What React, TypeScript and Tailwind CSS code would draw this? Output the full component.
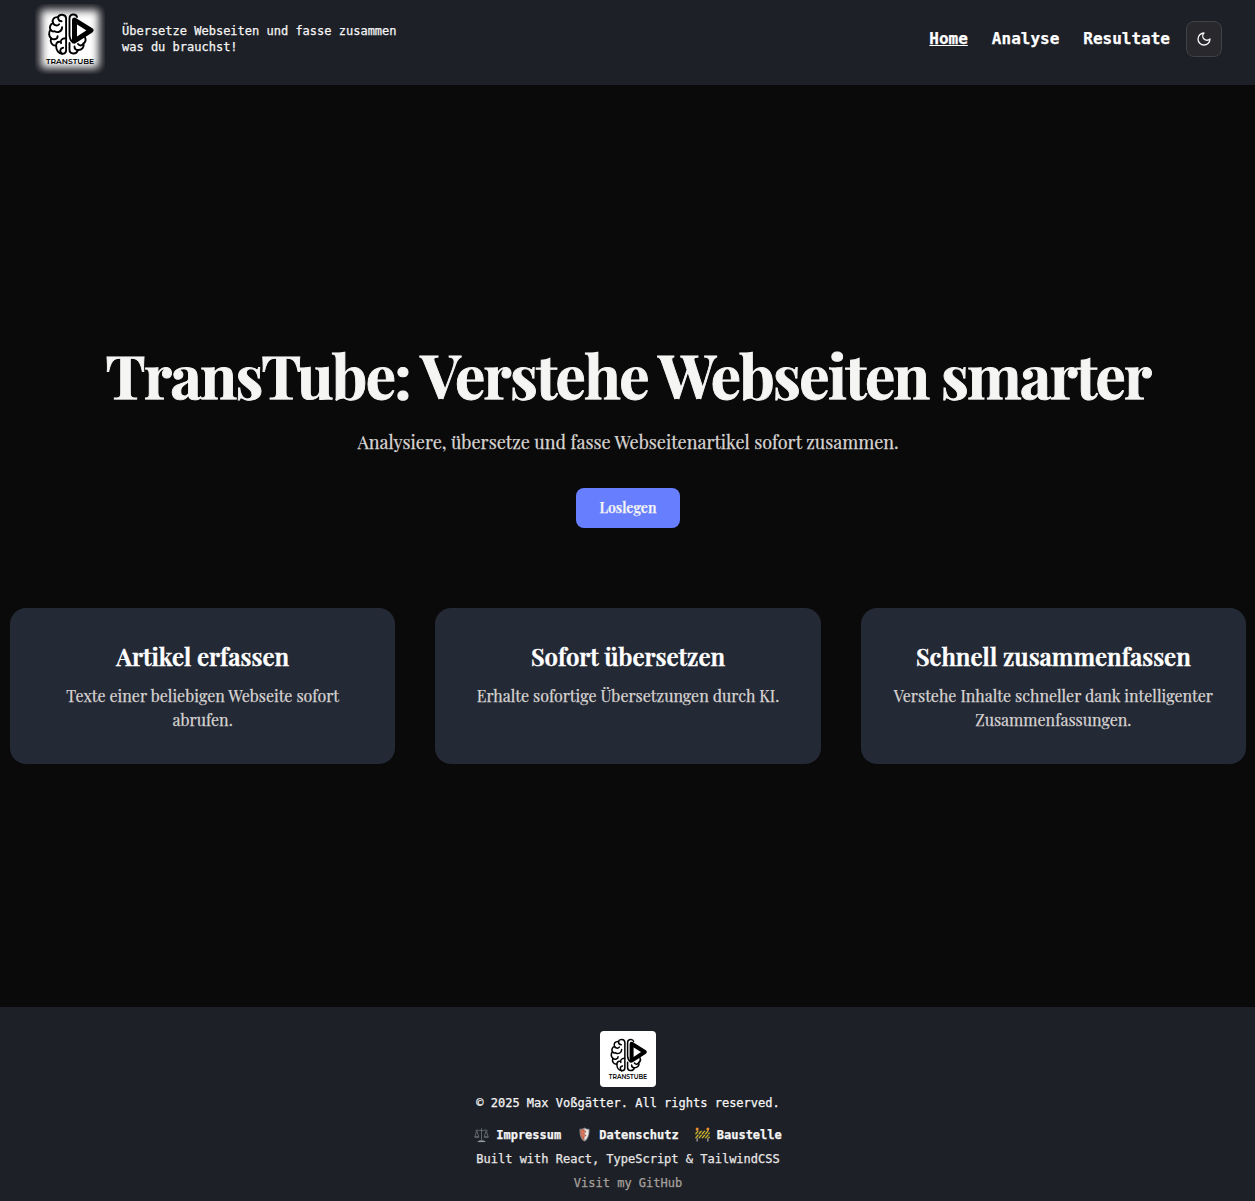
import React from "react";

const serif = "font-['Playfair_Display','Liberation_Serif',serif]";

function LogoMark({ className }: { className: string }) {
  return (
    <svg viewBox="0 0 70 70" className={className} role="img" aria-label="TransTube">
      <g fill="none" stroke="#000" strokeWidth="1.9" strokeLinecap="round" strokeLinejoin="round">
        <g transform="translate(0.6 0.7)">
          <path d="M30.5 13.5C30 9 23.500 9 22.500 12.500C18.500 12 16 15 17.500 18.500C14.500 19.500 13.500 23 15 25C12.800 27.500 13 31.500 15.500 33.500C14 37.500 16.500 41 20.500 41C20.500 45.500 23 49 26.500 49C29 49 30.500 47.500 30.500 45.500Z" />
          <path d="M22.500 12.500C22.500 15 24 16.500 26 16.500M17.500 18.500C18.500 21 22 21.500 23.500 19.500M26.500 22.500C26.500 27 22 28.500 19 26.500M15 25C16 27 17.500 27 19 26.500M15.500 33.500C18 35.500 22 34.500 22 31.500M30 33.500C26 33.500 24.500 36 25.500 38.500M20.500 41C20.500 38.500 22 37 24 37M26.500 49C23.500 47 24.500 43.500 27.500 43" />
        </g>
        <path d="M34.500 31V14.500C34.500 9.500 41 9.500 42 13M34.500 31C34.500 34 35.500 36.500 38 38.500M34.500 39V45.500C34.500 50.500 41.500 51 43 46C47 46 49.500 43 48.500 39.500C50.500 38 51 35.500 50 33.500" />
        <path d="M43 46C40.500 46 39.500 44.500 39.500 42.500M48.500 39.500C47 42 44.500 42 43 40" />
      </g>
      <path d="M39.500 16L56 26.300L39.500 37Z" fill="#fff" stroke="#000" strokeWidth="5" strokeLinejoin="round" />
      <text x="11" y="60.300" fontFamily="Montserrat, Inter, sans-serif" fontSize="7.900" fontWeight="600" textLength="48" lengthAdjust="spacingAndGlyphs">
        TRANSTUBE
      </text>
    </svg>
  );
}

function ScalesIcon() {
  return (
    <svg viewBox="0 0 16 16" className="-mt-px h-4 w-[15px]" fill="none" stroke="#656a70" strokeWidth="1">
      <path d="M8 .8V14M1.500 3.500C4 1.500 5.500 4 8 3C10.500 4 12 1.500 14.500 3.500M3 3.500L.8 10H5.200ZM13 3.500L10.800 10H15.200Z" />
      <path d="M.7 10.300H5.300M10.700 10.300H15.300M5.500 14H10.500" strokeWidth="1.500" />
      <path d="M4 15H12" stroke="#a8abad" />
    </svg>
  );
}

function ShieldIcon() {
  return (
    <svg viewBox="0 0 16 16" className="-mt-px h-[15px] w-[15px]">
      <path d="M8 .5C6 1.800 4.500 2 2.700 2C2.500 8 3.500 13 8 15.500C12.500 13 13.500 8 13.300 2C11.500 2 10 1.800 8 .5Z" fill="#85898c" />
      <path d="M8 1.500C6.500 2.500 5 2.800 3.600 2.900C3.600 8 4.500 12 8 14.300Z" fill="#cf694d" />
      <path d="M8 1.500C9.500 2.500 11 2.800 12.400 2.900C12.400 8 11.500 12 8 14.300Z" fill="#e7e7e5" />
      <path d="M8 3L10 5L8 7L10 9L8 11Z" fill="#b85540" />
      <path d="M5 5L7 6M5 8L7 9" stroke="#e6a28d" strokeWidth=".8" />
    </svg>
  );
}

function BarrierIcon() {
  return (
    <svg viewBox="0 0 16 16" className="-mt-px h-[15px] w-[15px]">
      <path d="M2.300 2V15.500M13.700 2V15.500" stroke="#a9a9a5" strokeWidth="1.300" />
      <path d="M.5 4H15.500V12H.5Z" fill="#30332e" />
      <path d="M.5 7.500L3.500 4M4 7.500L7 4M7.500 7.500L10.500 4M11 7.500L14 4M.5 12L3.500 8.500M4 12L7 8.500M7.500 12L10.500 8.500M11 12L14 8.500M14.300 7.500L15.500 6M14.300 12L15.500 10.500" stroke="#e3c32a" strokeWidth="1.200" />
      <circle cx="2.300" cy="2" r="1.600" fill="#ee8d2d" />
      <circle cx="13.700" cy="2" r="1.600" fill="#ee8d2d" />
    </svg>
  );
}

const features = [
  { title: "Artikel erfassen", text: "Texte einer beliebigen Webseite sofort abrufen." },
  { title: "Sofort übersetzen", text: "Erhalte sofortige Übersetzungen durch KI." },
  { title: "Schnell zusammenfassen", text: "Verstehe Inhalte schneller dank intelligenter Zusammenfassungen." },
];

export default function App() {
  return (
    <div className="flex min-h-[1201px] flex-col bg-[#0a0a0a] font-['DejaVu_Sans_Mono',monospace] text-[#f5f5f4] [-webkit-text-stroke:0.25px]">
      <header className="flex h-[85px] items-start justify-between bg-[#1e2028] pl-[35px] pr-[33px]">
        <div className="flex items-start gap-[17px] pt-1">
          <div className="relative h-[70px] w-[70px] overflow-hidden rounded-lg bg-[#1b1c23]">
            <div className="absolute inset-[6px] bg-white blur-[4px]" />
            <LogoMark className="relative h-[70px] w-[70px] [-webkit-text-stroke:0px]" />
          </div>
          <p className="pt-[19px] text-xs leading-4">
            Übersetze Webseiten und fasse zusammen
            <br />
            was du brauchst!
          </p>
        </div>
        <div className="flex items-center gap-4 pt-[21px]">
          <nav className="flex gap-6 text-base font-bold leading-6 text-white">
            <a href="#" className="underline">Home</a>
            <a href="#">Analyse</a>
            <a href="#">Resultate</a>
          </nav>
          <button aria-label="Theme" className="flex h-9 w-9 items-center justify-center rounded-lg border border-[#414246] bg-[#29292d]">
            <svg viewBox="0 0 24 24" className="h-4 w-4" fill="none" stroke="#f5f5f4" strokeWidth="2" strokeLinecap="round" strokeLinejoin="round">
              <path d="M12 3a6 6 0 0 0 9 9 9 9 0 1 1-9-9Z" />
            </svg>
          </button>
        </div>
      </header>

      <main className={`flex grow flex-col items-center pl-px ${serif}`}>
        <h1 className="mt-[259px] whitespace-nowrap text-6xl font-bold leading-[60px] tracking-tight [-webkit-text-stroke:0.9px]">
          TransTube: Verstehe Webseiten smarter
        </h1>
        <p className="mt-6 whitespace-nowrap text-lg leading-7 text-[#d6d3d1]">
          Analysiere, übersetze und fasse Webseitenartikel sofort zusammen.
        </p>
        <button className="mt-8 flex h-10 w-[104px] items-center justify-center rounded-lg bg-[#677fff] text-sm font-semibold text-[#f5f5f4]">
          Loslegen
        </button>
        <section className="mt-20 grid w-[1236px] grid-cols-3 gap-10">
          {features.map((f) => (
            <article key={f.title} className="flex h-[156px] flex-col items-center gap-3 rounded-2xl bg-[#242936] p-8 text-center">
              <h2 className="whitespace-nowrap text-2xl font-semibold leading-8 text-white [-webkit-text-stroke:0.5px]">{f.title}</h2>
              <p className="text-base leading-6 text-[#d6d3d1]">{f.text}</p>
            </article>
          ))}
        </section>
      </main>

      <footer className="flex h-[194px] flex-col items-center bg-[#1e2028] pl-px pt-6 text-xs leading-4">
        <div className="h-14 w-14 overflow-hidden rounded bg-white">
          <LogoMark className="h-14 w-14 [-webkit-text-stroke:0px]" />
        </div>
        <p className="mt-2">© 2025 Max Voßgätter. All rights reserved.</p>
        <div className="mt-4 flex gap-4 font-bold">
          <a href="#" className="flex items-center gap-[7px]"><ScalesIcon />Impressum</a>
          <a href="#" className="flex items-center gap-[7px]"><ShieldIcon />Datenschutz</a>
          <a href="#" className="flex items-center gap-[7px]"><BarrierIcon />Baustelle</a>
        </div>
        <p className="mt-2 text-[#e7e5e4]">Built with React, TypeScript &amp; TailwindCSS</p>
        <a href="#" className="mt-2 text-[#a6a09b]">Visit my GitHub</a>
      </footer>
    </div>
  );
}
